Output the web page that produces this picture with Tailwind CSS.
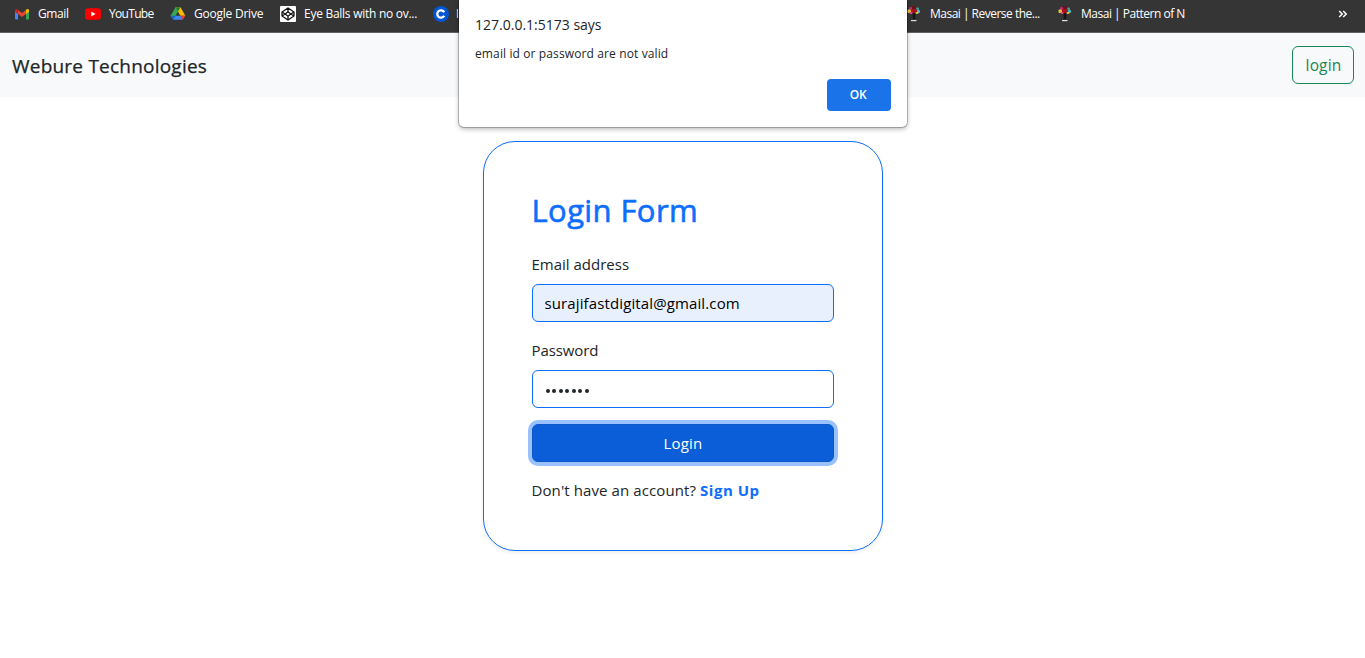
<!DOCTYPE html>
<html lang="en">
<head>
<meta charset="utf-8">
<title>Webure Technologies</title>
<script src="https://cdn.jsdelivr.net/npm/@tailwindcss/browser@4"></script>
</head>
<body class="h-[658px] overflow-hidden bg-white font-['Open_Sans','Noto_Sans',sans-serif] text-[15px] text-[#212529]">
<svg class="hidden">
  <symbol id="masai" viewBox="0 0 16 16">
    <path d="M6.5 7h3l-.4 6H6.9z" fill="#161616"/>
    <rect x="5" y="14" width="5.5" height="1.2" fill="#ddd"/>
    <rect x="3" y="1" width="3" height="3" rx="1" fill="#b52c78"/><rect x="6" y="0" width="4" height="3" rx="1" fill="#6d101b"/>
    <rect x="10" y="1.5" width="3" height="3" rx="1" fill="#2fa795"/><rect x="1.5" y="3.5" width="3.5" height="3.5" rx="1" fill="#e6c637"/>
    <rect x="11" y="4" width="3" height="3" rx="1" fill="#45bfd0"/><rect x="5" y="3" width="6" height="4" rx="1" fill="#a80f1c"/>
    <rect x="3.5" y="6" width="3" height="2" rx="1" fill="#d94b8c"/><rect x="9.5" y="6" width="3" height="2" rx="1" fill="#d9c13a"/>
  </symbol>
</svg>
<div class="flex h-[33px] items-start border-b border-[#5f6368] bg-[#353535] pl-[14px] text-[12px] leading-7 text-white">
  <div class="flex h-7 w-[71px] shrink-0 items-center gap-2">
    <svg class="h-4 w-4 shrink-0" viewBox="0 0 16 16"><path d="M1 4.5h3v9H2q-1 0-1-1z" fill="#4285f4"/><path d="M12 4.5h3v8q0 1-1 1h-2z" fill="#34a853"/><path d="M4 4v4l4 3 4-3V4L8 7z" fill="#ea4335"/><path d="M1 4.7c0-2.2 1.8-2 3-1v4.4L1 5.8z" fill="#c5221f"/><path d="M15 4.7c0-2.2-1.8-2-3-1v4.4l3-2.3z" fill="#fbbc04"/></svg>
    <span class="whitespace-nowrap tracking-[-0.4px]">Gmail</span>
  </div>
  <div class="flex h-7 w-[85px] shrink-0 items-center gap-2">
    <svg class="h-4 w-4 shrink-0" viewBox="0 0 16 16"><rect y="2.2" width="16" height="11.5" rx="3" fill="#f00"/><path d="M6.3 5.6v4.8l4.2-2.4z" fill="#fff"/></svg>
    <span class="whitespace-nowrap tracking-[-0.68px]">YouTube</span>
  </div>
  <div class="flex h-7 w-[110px] shrink-0 items-center gap-2">
    <svg class="h-4 w-4 shrink-0" viewBox="0 0 16 16"><path d="M5.5 1.2 8 5.5 3.3 13.8 .6 9.8z" fill="#34a853"/><path d="M10.5 1.2 15.4 9.8h-5L8 5.5 5.5 1.2z" fill="#fbbc04"/><path d="M5.5 1.2h5L8 5.5z" fill="#188038"/><path d="M5.6 9.8h4.8l2.4 4H3.2z" fill="#4285f4"/><path d="M.6 9.8h5l-2.4 4z" fill="#1967d2"/><path d="M10.4 9.8h5l-2.6 4z" fill="#ea4335"/></svg>
    <span class="whitespace-nowrap tracking-[-0.23px]">Google Drive</span>
  </div>
  <div class="flex h-7 w-[153px] shrink-0 items-center gap-2">
    <svg class="h-4 w-4 shrink-0" viewBox="0 0 16 16" fill="none" stroke="#111" stroke-width="1.3" stroke-linejoin="round"><rect width="16" height="16" rx="1" fill="#fff" stroke="none"/><path d="M8 2 14 6v4L8 14 2 10V6zM8 2v3.8M8 10.2V14M2 6l3.2 2L8 5.8 10.8 8 14 6M2 10l3.2-2L8 10.2 10.8 8 14 10"/></svg>
    <span class="whitespace-nowrap tracking-[-0.27px]">Eye Balls with no ov...</span>
  </div>
  <div class="mr-[448px] flex h-7 w-[25px] shrink-0 items-center gap-[7px] overflow-hidden">
    <svg class="h-4 w-4 shrink-0" viewBox="0 0 16 16"><circle cx="8" cy="8" r="8" fill="#0056d2"/><path d="M11.2 6.2A3.7 3.7 0 1 0 11.2 9.8" fill="none" stroke="#fff" stroke-width="2.3"/></svg>
    <span class="whitespace-nowrap">I</span>
  </div>
  <div class="flex h-7 w-[151px] shrink-0 items-center gap-2">
    <svg class="h-4 w-4 shrink-0"><use href="#masai"/></svg>
    <span class="whitespace-nowrap tracking-[-0.51px]">Masai | Reverse the...</span>
  </div>
  <div class="flex h-7 flex-1 items-center gap-2">
    <svg class="h-4 w-4 shrink-0"><use href="#masai"/></svg>
    <span class="whitespace-nowrap tracking-[-0.49px]">Masai | Pattern of N</span>
  </div>
  <svg class="mt-[10px] mr-[17px] h-2 w-[10px]" viewBox="0 0 10 8" fill="none" stroke="#fff" stroke-width="1.5"><path d="m1.2 1 3 3-3 3M5.2 1l3 3-3 3"/></svg>
</div>
<nav class="flex h-16 items-center justify-between bg-[#f8f9fa] pr-[11px] pl-3">
  <span class="pt-[2px] text-[19px] tracking-[0.22px] whitespace-nowrap [-webkit-text-stroke:0.25px_#212529]">Webure Technologies</span>
  <button class="h-[38px] w-[62px] rounded-md border border-[#198754] pt-px pl-px text-[15.5px] tracking-[0.15px] text-[#198754]">login</button>
</nav>
<main class="flex justify-center pt-11">
  <form class="h-[410px] w-[400px] rounded-[32px] border border-[#0d6efd] px-12 pt-12 shadow-[0_2px_4px_rgba(0,0,0,0.075)]">
    <h2 class="h-[62px] text-[31px] leading-10 tracking-[0.4px] whitespace-nowrap text-[#0d6efd] [-webkit-text-stroke:0.6px_#0d6efd]">Login Form</h2>
    <label class="block h-8 leading-6">Email address</label>
    <div class="flex h-[38px] items-center rounded-md border border-[#0d6efd] bg-[#e8f0fe] px-3 text-black"><span class="tracking-[0.12px] whitespace-nowrap">surajifastdigital@gmail.com</span></div>
    <label class="mt-4 block h-8 leading-6 tracking-[-0.1px]">Password</label>
    <div class="flex h-[38px] items-center gap-[2.5px] rounded-md border border-[#0d6efd] px-[13px] pt-[3px]">
      <i class="size-[4px] rounded-full bg-[#212529]"></i><i class="size-[4px] rounded-full bg-[#212529]"></i><i class="size-[4px] rounded-full bg-[#212529]"></i><i class="size-[4px] rounded-full bg-[#212529]"></i><i class="size-[4px] rounded-full bg-[#212529]"></i><i class="size-[4px] rounded-full bg-[#212529]"></i><i class="size-[4px] rounded-full bg-[#212529]"></i>
    </div>
    <button type="button" class="mt-4 block h-[38px] w-full rounded-md border border-[#0a58ca] bg-[#0b5ed7] pl-px tracking-[0.2px] text-white shadow-[0_0_0_4px_rgba(49,132,253,0.5)]">Login</button>
    <p class="mt-4 leading-6 tracking-[0.1px] whitespace-nowrap">Don't have an account? <b class="tracking-[0.5px] text-[#0d6efd]">Sign Up</b></p>
  </form>
</main>
<div class="absolute top-0 left-[459px] h-[127px] w-[448px] rounded-b-[5px] bg-white px-4 pt-[14px] shadow-[0_0_0_1px_rgba(0,0,0,0.22),0_2px_5px_rgba(0,0,0,0.3)]">
  <p class="h-[29px] text-[14px] leading-[22px] whitespace-nowrap">127.0.0.1:5173 says</p>
  <p class="text-[12px] leading-[22px] tracking-[0.12px] whitespace-nowrap">email id or password are not valid</p>
  <button class="mt-[14px] ml-auto block h-8 w-16 rounded-[4px] bg-[#1a73e8] pr-[2px] text-[12px] font-semibold tracking-[-0.2px] text-white">OK</button>
</div>
</body>
</html>
